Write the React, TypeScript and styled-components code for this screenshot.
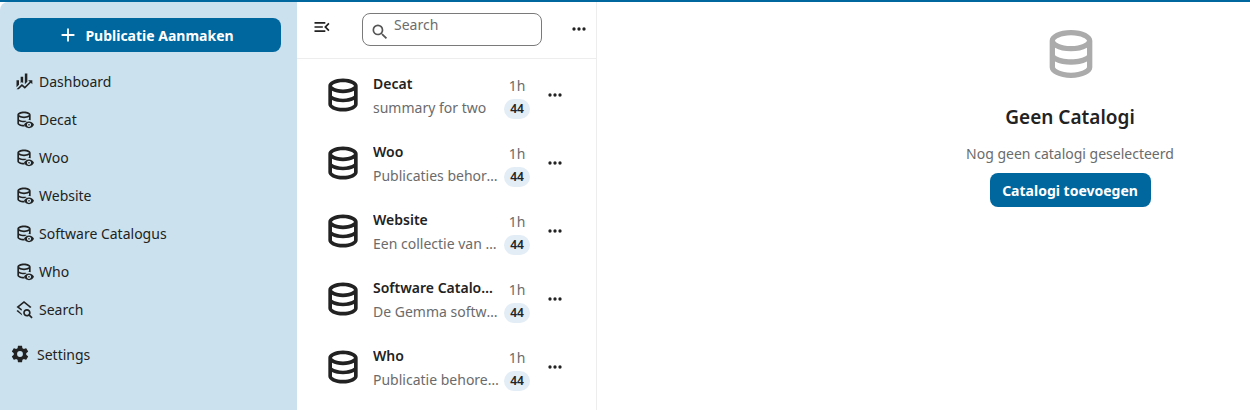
import React from "react";
import styled, { createGlobalStyle } from "styled-components";

const FONT = `"Noto Sans", "Open Sans", sans-serif`;

const Global = createGlobalStyle`
  html, body { margin: 0; padding: 0; background: #fff; }
  body { font-family: ${FONT}; color: #222; }
`;

const Page = styled.div`
  width: 1250px;
  height: 410px;
  overflow: hidden;
  display: flex;
  flex-direction: column;
  background: #fff;
`;
const TopBar = styled.div`
  height: 2px;
  flex: none;
  background: #00679e;
`;
const Body = styled.div`
  flex: 1;
  display: flex;
  min-height: 0;
`;
const Sidebar = styled.nav`
  width: 297px;
  flex: none;
  background: #cbe2ee;
  padding: 16px 16px 0 13px;
  box-sizing: border-box;
  border-top-left-radius: 8px;
  display: flex;
  flex-direction: column;
`;
const PrimaryButton = styled.button`
  height: 34px;
  border: 0;
  border-radius: 8px;
  background: #00679e;
  color: #fff;
  font: 700 14px ${FONT};
  display: flex;
  align-items: center;
  justify-content: center;
  gap: 6px;
  padding: 0 3px 0 0;
  flex: none;
`;
const NavList = styled.div`
  margin-top: 10px;
  display: flex;
  flex-direction: column;
`;
const NavItem = styled.div`
  height: 38px;
  display: flex;
  align-items: center;
  gap: 5px;
  padding-left: 1px;
  font-size: 14px;
  color: #222;
`;
const SettingsRow = styled.div`
  height: 38px;
  margin-top: 7px;
  margin-left: -3px;
  display: flex;
  align-items: center;
  gap: 7px;
  font-size: 14px;
  color: #222;
`;
const ListPane = styled.section`
  width: 299px;
  flex: none;
  border-right: 1px solid #ededed;
  display: flex;
  flex-direction: column;
`;
const ListHeader = styled.div`
  height: 57px;
  flex: none;
  border-bottom: 1px solid #ededed;
  display: flex;
  align-items: flex-start;
  padding: 11px 7px 0 15px;
  box-sizing: border-box;
`;
const ToggleButton = styled.span`
  width: 20px;
  height: 24px;
  display: flex;
  align-items: center;
  justify-content: center;
  margin-top: 2px;
`;
const SearchBox = styled.div`
  width: 180px;
  height: 33px;
  margin-left: 30px;
  border: 1px solid #7a7a7a;
  border-radius: 8px;
  box-sizing: border-box;
  display: flex;
  align-items: flex-start;
  padding: 4px 0 0 7px;
  gap: 4px;
  color: #6d6d6d;
  font-size: 14px;
  line-height: 14px;
`;
const SearchIconWrap = styled.span`
  display: flex;
  margin-top: 4px;
`;
const HeaderMore = styled.span`
  margin-left: auto;
  margin-top: 6px;
  display: flex;
`;
const Rows = styled.div`
  display: flex;
  flex-direction: column;
`;
const Row = styled.div`
  height: 68px;
  display: flex;
  padding-left: 24px;
  box-sizing: border-box;
  flex: none;
`;
const RowIcon = styled.span`
  width: 44px;
  height: 44px;
  margin-top: 14px;
  flex: none;
  display: flex;
`;
const RowText = styled.div`
  width: 128px;
  margin-left: 8px;
  padding-top: 15px;
  flex: none;
  min-width: 0;
`;
const RowTitle = styled.div`
  font-weight: 600;
  font-size: 14px;
  line-height: 20px;
  color: #222;
  white-space: nowrap;
  overflow: hidden;
  text-overflow: ellipsis;
`;
const RowSub = styled.div`
  margin-top: 4px;
  font-size: 14px;
  line-height: 20px;
  color: #6b6b6b;
  white-space: nowrap;
  overflow: hidden;
  text-overflow: ellipsis;
`;
const RowMeta = styled.div`
  width: 30px;
  margin-left: 1px;
  padding-top: 17px;
  flex: none;
  display: flex;
  flex-direction: column;
  align-items: center;
`;
const RowTime = styled.span`
  font-size: 14px;
  line-height: 20px;
  color: #6b6b6b;
`;
const Count = styled.span`
  margin-top: 3px;
  width: 26px;
  height: 20px;
  border-radius: 10px;
  background: #e3edf5;
  color: #222;
  font-size: 12px;
  font-weight: 600;
  line-height: 20px;
  text-align: center;
`;
const RowMore = styled.span`
  margin-left: 13px;
  margin-top: 26px;
  display: flex;
`;
const Detail = styled.main`
  flex: 1;
  display: flex;
  flex-direction: column;
  align-items: center;
  padding: 20px 0 0 293px;
`;
const EmptyIcon = styled.span`
  display: flex;
  margin-left: 2px;
`;
const EmptyTitle = styled.h2`
  margin: 18px 0 0;
  font-size: 19px;
  line-height: 26px;
  font-weight: 600;
  color: #222;
`;
const EmptyText = styled.p`
  margin: 14px 0 0;
  font-size: 14px;
  line-height: 20px;
  color: #6b6b6b;
`;
const EmptyButton = styled.button`
  margin-top: 9px;
  height: 34px;
  width: 161px;
  border: 0;
  border-radius: 8px;
  background: #00679e;
  color: #fff;
  font: 700 14px ${FONT};
  padding: 0;
`;

const DB = "M12 3C7.58 3 4 4.79 4 7V17C4 19.21 7.59 21 12 21S20 19.21 20 17V7C20 4.79 16.42 3 12 3M18 17C18 17.5 15.87 19 12 19S6 17.5 6 17V14.77C7.61 15.55 9.72 16 12 16S16.39 15.55 18 14.77V17M18 12.45C16.7 13.4 14.42 14 12 14C9.58 14 7.3 13.4 6 12.45V9.64C7.47 10.47 9.61 11 12 11C14.39 11 16.53 10.47 18 9.64V12.45M12 9C8.13 9 6 7.5 6 7S8.13 5 12 5C15.87 5 18 6.5 18 7S15.87 9 12 9Z";
const DB_EYE = "M12 3C7.58 3 4 4.79 4 7V17C4 19.21 7.59 21 12 21L13 21C12.5 20.4 12 19.7 11.6 19C8 18.9 6 17.5 6 17V14.77C7.61 15.55 9.72 16 12 16H12.4C13.3 15.4 14.3 14.9 15.4 14.6C14.4 13.9 13.2 14 12 14C9.58 14 7.3 13.4 6 12.45V9.64C7.47 10.47 9.61 11 12 11C14.39 11 16.53 10.47 18 9.64V12.45C17.6 12.8 17 13 16.4 13.3C17.3 13.2 18.7 13.2 20 13.5V7C20 4.79 16.42 3 12 3M12 9C8.13 9 6 7.5 6 7S8.13 5 12 5C15.87 5 18 6.5 18 7S15.87 9 12 9M18 15C15.27 15 12.94 16.66 12 19C12.94 21.34 15.27 23 18 23S23.06 21.34 24 19C23.06 16.66 20.73 15 18 15M18 21.5C16.62 21.5 15.5 20.38 15.5 19S16.62 16.5 18 16.5 20.5 17.62 20.5 19 19.38 21.5 18 21.5M18 18C17.45 18 17 18.45 17 19S17.45 20 18 20 19 19.55 19 19 18.55 18 18 18Z";
const FINANCE = "M6 16.5L3 19.44V11H6M11 14.66L9.43 13.32L8 14.64V7H11M16 13L13 16V3H16M18.81 12.81L17 11H22V16L20.21 14.21L13 21.36L9.53 18.34L5.75 22H3L9.47 15.66L13 18.64";
const LAYERS_SEARCH = "M19.31 18.9C19.75 18.21 20 17.38 20 16.5C20 14 18 12 15.5 12S11 14 11 16.5 13 21 15.5 21C16.37 21 17.19 20.75 17.88 20.32L21 23.39L22.39 22L19.31 18.9M15.5 19C14.12 19 13 17.88 13 16.5S14.12 14 15.5 14 18 15.12 18 16.5 16.88 19 15.5 19M3 9.5L12 2.5L21 9.5L19.4 10.8C18.9 10.4 18.3 10 17.6 9.7L18 9.5L12 4.9L6.1 9.5L9.6 12.2C9.3 12.8 9.1 13.5 9 14.2L3 9.5M4.6 13.3L3 14.5L9.9 19.9C9.6 19.2 9.4 18.4 9.3 17.6L4.6 13.3Z";
const COG = "M12,15.5A3.5,3.5 0 0,1 8.5,12A3.5,3.5 0 0,1 12,8.5A3.5,3.5 0 0,1 15.5,12A3.5,3.5 0 0,1 12,15.5M19.43,12.97C19.47,12.65 19.5,12.33 19.5,12C19.5,11.67 19.47,11.34 19.43,11L21.54,9.37C21.73,9.22 21.78,8.95 21.66,8.73L19.66,5.27C19.54,5.05 19.27,4.96 19.05,5.05L16.56,6.05C16.04,5.66 15.5,5.32 14.87,5.07L14.5,2.42C14.46,2.18 14.25,2 14,2H10C9.75,2 9.54,2.18 9.5,2.42L9.13,5.07C8.5,5.32 7.96,5.66 7.44,6.05L4.95,5.05C4.73,4.96 4.46,5.05 4.34,5.27L2.34,8.73C2.21,8.95 2.27,9.22 2.46,9.37L4.57,11C4.53,11.34 4.5,11.67 4.5,12C4.5,12.33 4.53,12.65 4.57,12.97L2.46,14.63C2.27,14.78 2.21,15.05 2.34,15.27L4.34,18.73C4.46,18.95 4.73,19.03 4.95,18.95L7.44,17.94C7.96,18.34 8.5,18.68 9.13,18.93L9.5,21.58C9.54,21.82 9.75,22 10,22H14C14.25,22 14.46,21.82 14.5,21.58L14.87,18.93C15.5,18.67 16.04,18.34 16.56,17.94L19.05,18.95C19.27,19.03 19.54,18.95 19.66,18.73L21.66,15.27C21.78,15.05 21.73,14.78 21.54,14.63L19.43,12.97Z";
const MAGNIFY = "M9.5,3A6.5,6.5 0 0,1 16,9.5C16,11.11 15.41,12.59 14.44,13.73L14.71,14H15.5L20.5,19L19,20.5L14,15.5V14.71L13.73,14.44C12.59,15.41 11.11,16 9.5,16A6.5,6.5 0 0,1 3,9.5A6.5,6.5 0 0,1 9.5,3M9.5,5C7,5 5,7 5,9.5C5,12 7,14 9.5,14C12,14 14,12 14,9.5C14,7 12,5 9.5,5Z";
const MENU_OPEN = "M21,15.61L19.59,17L14.58,12L19.59,7L21,8.39L17.44,12L21,15.61M3,6H16V8H3V6M3,13V11H13V13H3M3,18V16H16V18H3Z";
const DOTS = "M16,12A2,2 0 0,1 18,10A2,2 0 0,1 20,12A2,2 0 0,1 18,14A2,2 0 0,1 16,12M10,12A2,2 0 0,1 12,10A2,2 0 0,1 14,12A2,2 0 0,1 12,14A2,2 0 0,1 10,12M4,12A2,2 0 0,1 6,10A2,2 0 0,1 8,12A2,2 0 0,1 6,14A2,2 0 0,1 4,12Z";
const PLUS = "M19,13H13V19H11V13H5V11H11V5H13V11H19V13Z";

const Icon = ({ d, size = 20, color = "#222" }: { d: string; size?: number; color?: string }) => (
  <svg width={size} height={size} viewBox="0 0 24 24" fill={color} aria-hidden="true">
    <path d={d} />
  </svg>
);

const catalogs = [
  { title: "Decat", sub: "summary for two" },
  { title: "Woo", sub: "Publicaties behorende bij de Woo" },
  { title: "Website", sub: "Een collectie van publicaties" },
  { title: "Software Catalogus", sub: "De Gemma software catalogus" },
  { title: "Who", sub: "Publicatie behorende bij Who" },
];

export default function App() {
  return (
    <Page>
      <Global />
      <TopBar />
      <Body>
        <Sidebar>
          <PrimaryButton>
            <Icon d={PLUS} size={22} color="#fff" />
            Publicatie Aanmaken
          </PrimaryButton>
          <NavList>
            <NavItem><Icon d={FINANCE} />Dashboard</NavItem>
            {catalogs.map((c) => (
              <NavItem key={c.title}><Icon d={DB_EYE} />{c.title}</NavItem>
            ))}
            <NavItem><Icon d={LAYERS_SEARCH} />Search</NavItem>
          </NavList>
          <SettingsRow><Icon d={COG} size={20} />Settings</SettingsRow>
        </Sidebar>
        <ListPane>
          <ListHeader>
            <ToggleButton><Icon d={MENU_OPEN} size={20} /></ToggleButton>
            <SearchBox>
              <SearchIconWrap><Icon d={MAGNIFY} size={20} color="#555" /></SearchIconWrap>
              Search
            </SearchBox>
            <HeaderMore><Icon d={DOTS} size={20} /></HeaderMore>
          </ListHeader>
          <Rows>
            {catalogs.map((c) => (
              <Row key={c.title}>
                <RowIcon><Icon d={DB} size={44} /></RowIcon>
                <RowText>
                  <RowTitle>{c.title}</RowTitle>
                  <RowSub>{c.sub}</RowSub>
                </RowText>
                <RowMeta>
                  <RowTime>1h</RowTime>
                  <Count>44</Count>
                </RowMeta>
                <RowMore><Icon d={DOTS} size={20} /></RowMore>
              </Row>
            ))}
          </Rows>
        </ListPane>
        <Detail>
          <EmptyIcon><Icon d={DB} size={64} color="#ababab" /></EmptyIcon>
          <EmptyTitle>Geen Catalogi</EmptyTitle>
          <EmptyText>Nog geen catalogi geselecteerd</EmptyText>
          <EmptyButton>Catalogi toevoegen</EmptyButton>
        </Detail>
      </Body>
    </Page>
  );
}
